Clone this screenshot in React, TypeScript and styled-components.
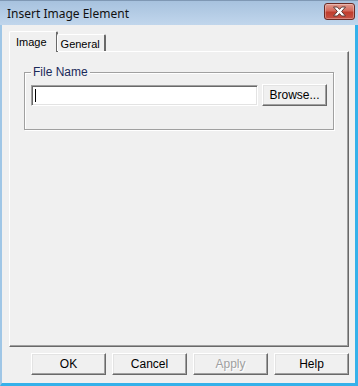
import React from "react";
import styled, { createGlobalStyle, css } from "styled-components";

const GlobalStyle = createGlobalStyle`
  html, body {
    margin: 0;
    padding: 0;
    background: #f0f0f0;
  }
  #root {
    width: 358px;
    height: 386px;
  }
`;

const Window = styled.div`
  box-sizing: border-box;
  width: 358px;
  height: 386px;
  display: flex;
  flex-direction: column;
  background: #f0f0f0;
  border-left: 2px solid #9fc6e6;
  border-right: 3px solid #35b1ea;
  border-bottom: 3px solid #35b1ea;
  font-family: "Liberation Sans", Arial, sans-serif;
  font-size: 11px;
  color: #000;
`;

const TitleBar = styled.div`
  height: 25px;
  flex: none;
  display: flex;
  align-items: center;
  justify-content: space-between;
  padding: 0 3px 0 5px;
  margin-left: -2px;
  margin-right: -3px;
  background: linear-gradient(#a7c2de, #c1d6ec);
  border-top: 1px solid #7f98b4;
  box-sizing: border-box;
`;

const Title = styled.span`
  font-family: "Noto Sans", "Liberation Sans", sans-serif;
  font-size: 12px;
  color: #111;
  padding-left: 2px;
  padding-top: 1px;
`;

const CloseButton = styled.div`
  width: 31px;
  height: 17px;
  box-sizing: border-box;
  border: 1px solid #6a2a24;
  border-radius: 3px;
  background: linear-gradient(#e09a8e 0%, #d46a5c 45%, #bf3e2e 55%, #c85245 100%);
  box-shadow: inset 0 0 0 1px rgba(255, 255, 255, 0.3);
  display: flex;
  align-items: center;
  justify-content: center;
  margin-top: -3px;
`;

const Body = styled.div`
  flex: 1;
  display: flex;
  flex-direction: column;
  padding: 7px 6px 8px 7px;
  min-height: 0;
`;

const TabStrip = styled.div`
  display: flex;
  align-items: flex-end;
  height: 20px;
  margin-bottom: -1px;
  position: relative;
  z-index: 1;
`;

const Tab = styled.div<{ $active?: boolean }>`
  box-sizing: border-box;
  background: #f0f0f0;
  border-top: 1px solid #fff;
  border-left: 1px solid #fff;
  border-right: 2px solid;
  border-right-color: #696969;
  border-radius: 2px 2px 0 0;
  display: flex;
  align-items: flex-start;
  font-size: 11px;
  white-space: nowrap;
  ${({ $active }) =>
    $active
      ? css`
          height: 21px;
          padding: 4px 9px 0 6px;
          margin-right: -1px;
        `
      : css`
          height: 17px;
          padding: 3px 4px 0 3px;
          margin-bottom: 1px;
        `}
`;

const Panel = styled.div`
  flex: 1;
  box-sizing: border-box;
  width: 340px;
  border-top: 1px solid #fff;
  border-left: 1px solid #fff;
  border-right: 1px solid #696969;
  border-bottom: 1px solid #696969;
  box-shadow: inset -1px -1px 0 #a0a0a0;
  padding: 20px 0 0 14px;
`;

const GroupBox = styled.div`
  position: relative;
  box-sizing: border-box;
  width: 310px;
  border: 1px solid #a0a0a0;
  box-shadow: inset 1px 1px 0 #fff, 1px 1px 0 #fff;
  display: flex;
  align-items: center;
  gap: 4px;
  padding: 11px 5px 23px 6px;
`;

const GroupLabel = styled.span`
  position: absolute;
  top: -7px;
  left: 6px;
  padding: 0 2px;
  background: #f0f0f0;
  color: #1a2a5a;
  font-size: 12px;
  line-height: 13px;
`;

const TextInput = styled.div`
  box-sizing: border-box;
  width: 227px;
  height: 21px;
  background: #fff;
  border-top: 1px solid #a0a0a0;
  border-left: 1px solid #a0a0a0;
  border-right: 1px solid #fff;
  border-bottom: 1px solid #fff;
  box-shadow: inset 1px 1px 0 #696969, inset -1px -1px 0 #e3e3e3;
  padding: 3px 3px;
`;

const Caret = styled.div`
  width: 1px;
  height: 13px;
  background: #000;
`;

const Button = styled.div<{ $w: number; $disabled?: boolean }>`
  box-sizing: border-box;
  width: ${({ $w }) => $w}px;
  height: 22px;
  background: #f0f0f0;
  border-top: 1px solid #fff;
  border-left: 1px solid #fff;
  border-right: 1px solid #696969;
  border-bottom: 1px solid #696969;
  box-shadow: inset -1px -1px 0 #a0a0a0, inset 1px 1px 0 #e3e3e3;
  display: flex;
  align-items: center;
  justify-content: center;
  font-size: 12px;
  color: ${({ $disabled }) => ($disabled ? "#a0a0a0" : "#000")};
  text-shadow: ${({ $disabled }) => ($disabled ? "1px 1px 0 #fff" : "none")};
`;

const ButtonRow = styled.div`
  display: flex;
  gap: 6px;
  padding: 6px 0 0 22px;
  flex: none;
`;

const CloseGlyph = () => (
  <svg width="15" height="11" viewBox="0 0 15 11">
    <path
      d="M1.5 1 H5.3 L7.5 3.4 L9.7 1 H13.5 L9.6 5.5 L13.5 10 H9.7 L7.5 7.6 L5.3 10 H1.5 L5.4 5.5 Z"
      fill="#fff"
      stroke="#5c3a36"
      strokeWidth="1"
      strokeLinejoin="round"
    />
  </svg>
);

const App: React.FC = () => {
  return (
    <>
      <GlobalStyle />
      <Window>
        <TitleBar>
          <Title>Insert Image Element</Title>
          <CloseButton>
            <CloseGlyph />
          </CloseButton>
        </TitleBar>
        <Body>
          <TabStrip>
            <Tab $active>Image</Tab>
            <Tab>General</Tab>
          </TabStrip>
          <Panel>
            <GroupBox>
              <GroupLabel>File Name</GroupLabel>
              <TextInput>
                <Caret />
              </TextInput>
              <Button $w={65}>Browse...</Button>
            </GroupBox>
          </Panel>
          <ButtonRow>
            <Button $w={75}>OK</Button>
            <Button $w={75}>Cancel</Button>
            <Button $w={75} $disabled>
              Apply
            </Button>
            <Button $w={75}>Help</Button>
          </ButtonRow>
        </Body>
      </Window>
    </>
  );
};

export default App;
